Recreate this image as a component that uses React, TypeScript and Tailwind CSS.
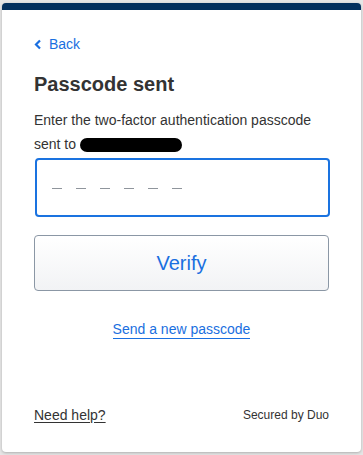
import React from 'react'

export default function App() {
  return (
    <div
      className="w-[363px] h-[455px] bg-[#e6e6e6] pt-[3px] pl-[2px] pr-[2px] pb-[3px]"
      style={{ fontFamily: '"Liberation Sans", Arial, sans-serif' }}
    >
      <div className="h-[449px] bg-white rounded-[4px] border-t-[7px] border-[#03305e] shadow-[0_1px_3px_rgba(0,0,0,0.25)] flex flex-col px-[32px] pt-[24px] pb-[27px]">
        {/* Back link */}
        <a href="#" className="flex items-center gap-[7px] text-[#1a6fe0] text-[14px] leading-[20px]">
          <svg width="8" height="11" viewBox="0 0 8 11" fill="none">
            <path d="M6 1.5L2 5.5L6 9.5" stroke="#1a6fe0" strokeWidth="2.2" />
          </svg>
          Back
        </a>

        <h1 className="mt-[16px] text-[20px] leading-[28px] font-bold text-[#333333]">Passcode sent</h1>

        <p className="mt-[10px] text-[14px] leading-[24px] text-[#333333]">
          Enter the two-factor authentication passcode sent to{' '}
          <span className="inline-block align-middle w-[102px] h-[14px] rounded-full bg-black" />
        </p>

        {/* Passcode field */}
        <div className="mt-[2px] h-[59px] ml-[1px] -mr-[1px] border-2 border-[#1a73e0] rounded-[4px] flex items-center pl-[15px] pt-[2px] gap-[14px]">
          {[0, 1, 2, 3, 4, 5].map(i => (
            <span key={i} className="block w-[10px] h-px bg-[#8f959c]" />
          ))}
        </div>

        <button className="mt-[18px] h-[56px] w-full rounded-[4px] border border-[#8b97a5] bg-gradient-to-b from-white to-[#f2f3f5] text-[#1a6fe0] text-[20px]">
          Verify
        </button>

        <div className="mt-[26px] text-center">
          <a href="#" className="text-[#1a6fe0] text-[14px] leading-[20px] border-b border-[#1a6fe0] pb-[1px]">
            Send a new passcode
          </a>
        </div>

        <div className="mt-auto flex items-center justify-between">
          <a href="#" className="text-[#333333] text-[14px] leading-[20px] underline underline-offset-2">Need help?</a>
          <span className="text-[#333333] text-[12px] leading-[20px]">Secured by Duo</span>
        </div>
      </div>
    </div>
  )
}
